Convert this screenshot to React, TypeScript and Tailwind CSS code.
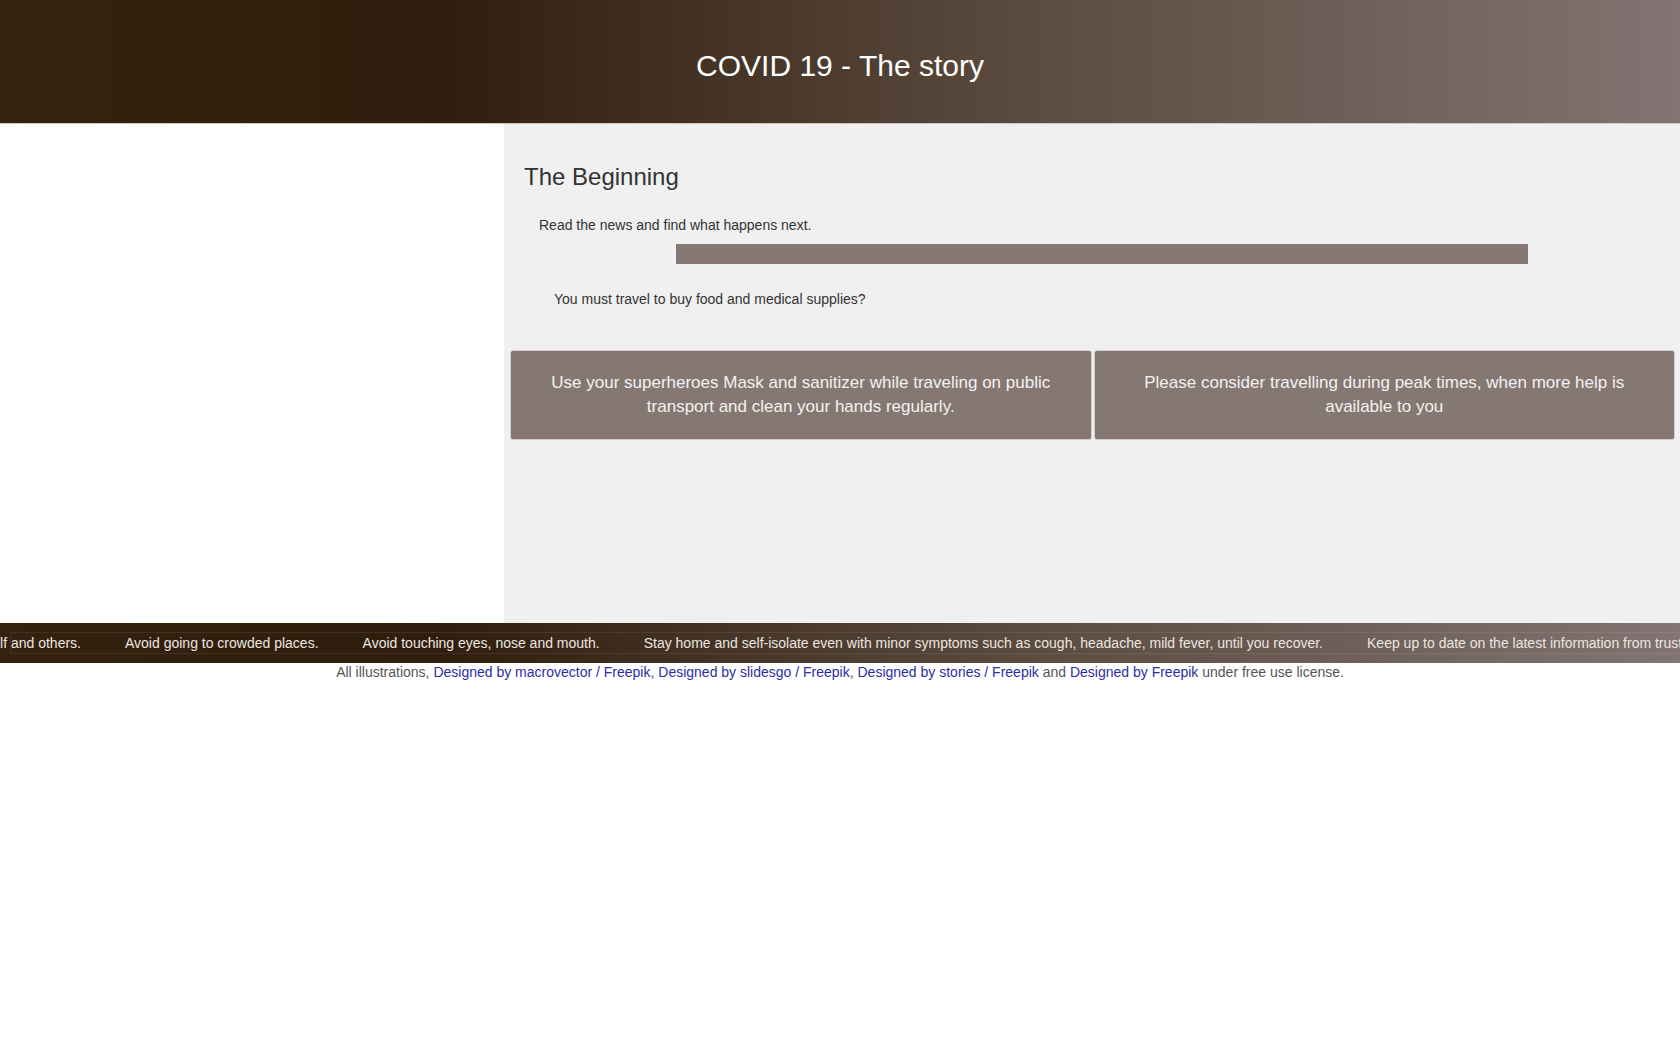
const tips = [
  "Avoid going to crowded places.",
  "Avoid touching eyes, nose and mouth.",
  "Stay home and self-isolate even with minor symptoms such as cough, headache, mild fever, until you recover.",
  "Keep up to date on the latest information from trusted sources, such as WHO or your local and national health authorities.",
]

const choices = [
  "Use your superheroes Mask and sanitizer while traveling on public transport and clean your hands regularly.",
  "Please consider travelling during peak times, when more help is available to you",
]

export default function App() {
  return (
    <div className="min-h-screen bg-white text-[#333] font-['Liberation_Sans',Arial,sans-serif]">
      {/* Header */}
      <header className="h-[124px] flex items-center justify-center pt-2 border-b border-[#cfc7c1] bg-[linear-gradient(90deg,#35230f_0%,#2f1e0d_26%,#5a4a3e_60%,#817472_100%)]">
        <h1 className="text-[30px] text-white">COVID 19 - The story</h1>
      </header>

      {/* Main */}
      <div className="flex h-[499px]">
        <div className="w-[504px] shrink-0 bg-white" />
        <main className="flex-1 bg-[#f0f0f0] pl-[6px] pr-[5px]">
          <h2 className="ml-[14px] mt-[39px] text-[24px] leading-[28px] text-[#333]">The Beginning</h2>
          <p className="ml-[29px] mt-[25px] text-[14px] leading-[18px]">Read the news and find what happens next.</p>
          <div className="ml-[166px] mt-[10px] w-[852px] h-[20px] bg-[#857873]" />
          <p className="ml-[44px] mt-[26px] text-[14px] leading-[18px]">You must travel to buy food and medical supplies?</p>
          <div className="mt-[42px] flex gap-[2px]">
            {choices.map((c) => (
              <button
                key={c}
                className="flex-1 h-[90px] px-10 rounded-[3px] border border-[#d4cdc9] bg-[#857873] text-[#f4f1f0] text-[17px] leading-[24px] text-center"
              >
                {c}
              </button>
            ))}
          </div>
        </main>
      </div>

      {/* Ticker */}
      <div className="h-10 flex items-center overflow-hidden bg-[linear-gradient(90deg,#34210f_0%,#2f1e0d_26%,#5a4a3e_60%,#817472_100%)]">
        <div className="ml-[10px] flex flex-1 items-center whitespace-nowrap text-[14px] leading-[20px] text-[#ece6e0] border border-r-0 border-[#ffffff14]">
          <span className="-ml-[11px] w-[81px] shrink-0 flex justify-end overflow-hidden">
            <span>Wash your hands often to protect yourself and others.</span>
          </span>
          {tips.map((t) => (
            <span key={t} className="shrink-0 ml-[44px]">
              {t}
            </span>
          ))}
        </div>
      </div>

      {/* Credits */}
      <p className="text-center text-[14px] leading-[18px] text-[#555]">
        All illustrations, <a className="text-[#2d2da6]">Designed by macrovector / Freepik</a>,{" "}
        <a className="text-[#2d2da6]">Designed by slidesgo / Freepik</a>,{" "}
        <a className="text-[#2d2da6]">Designed by stories / Freepik</a> and{" "}
        <a className="text-[#2d2da6]">Designed by Freepik</a> under free use license.
      </p>
    </div>
  )
}
